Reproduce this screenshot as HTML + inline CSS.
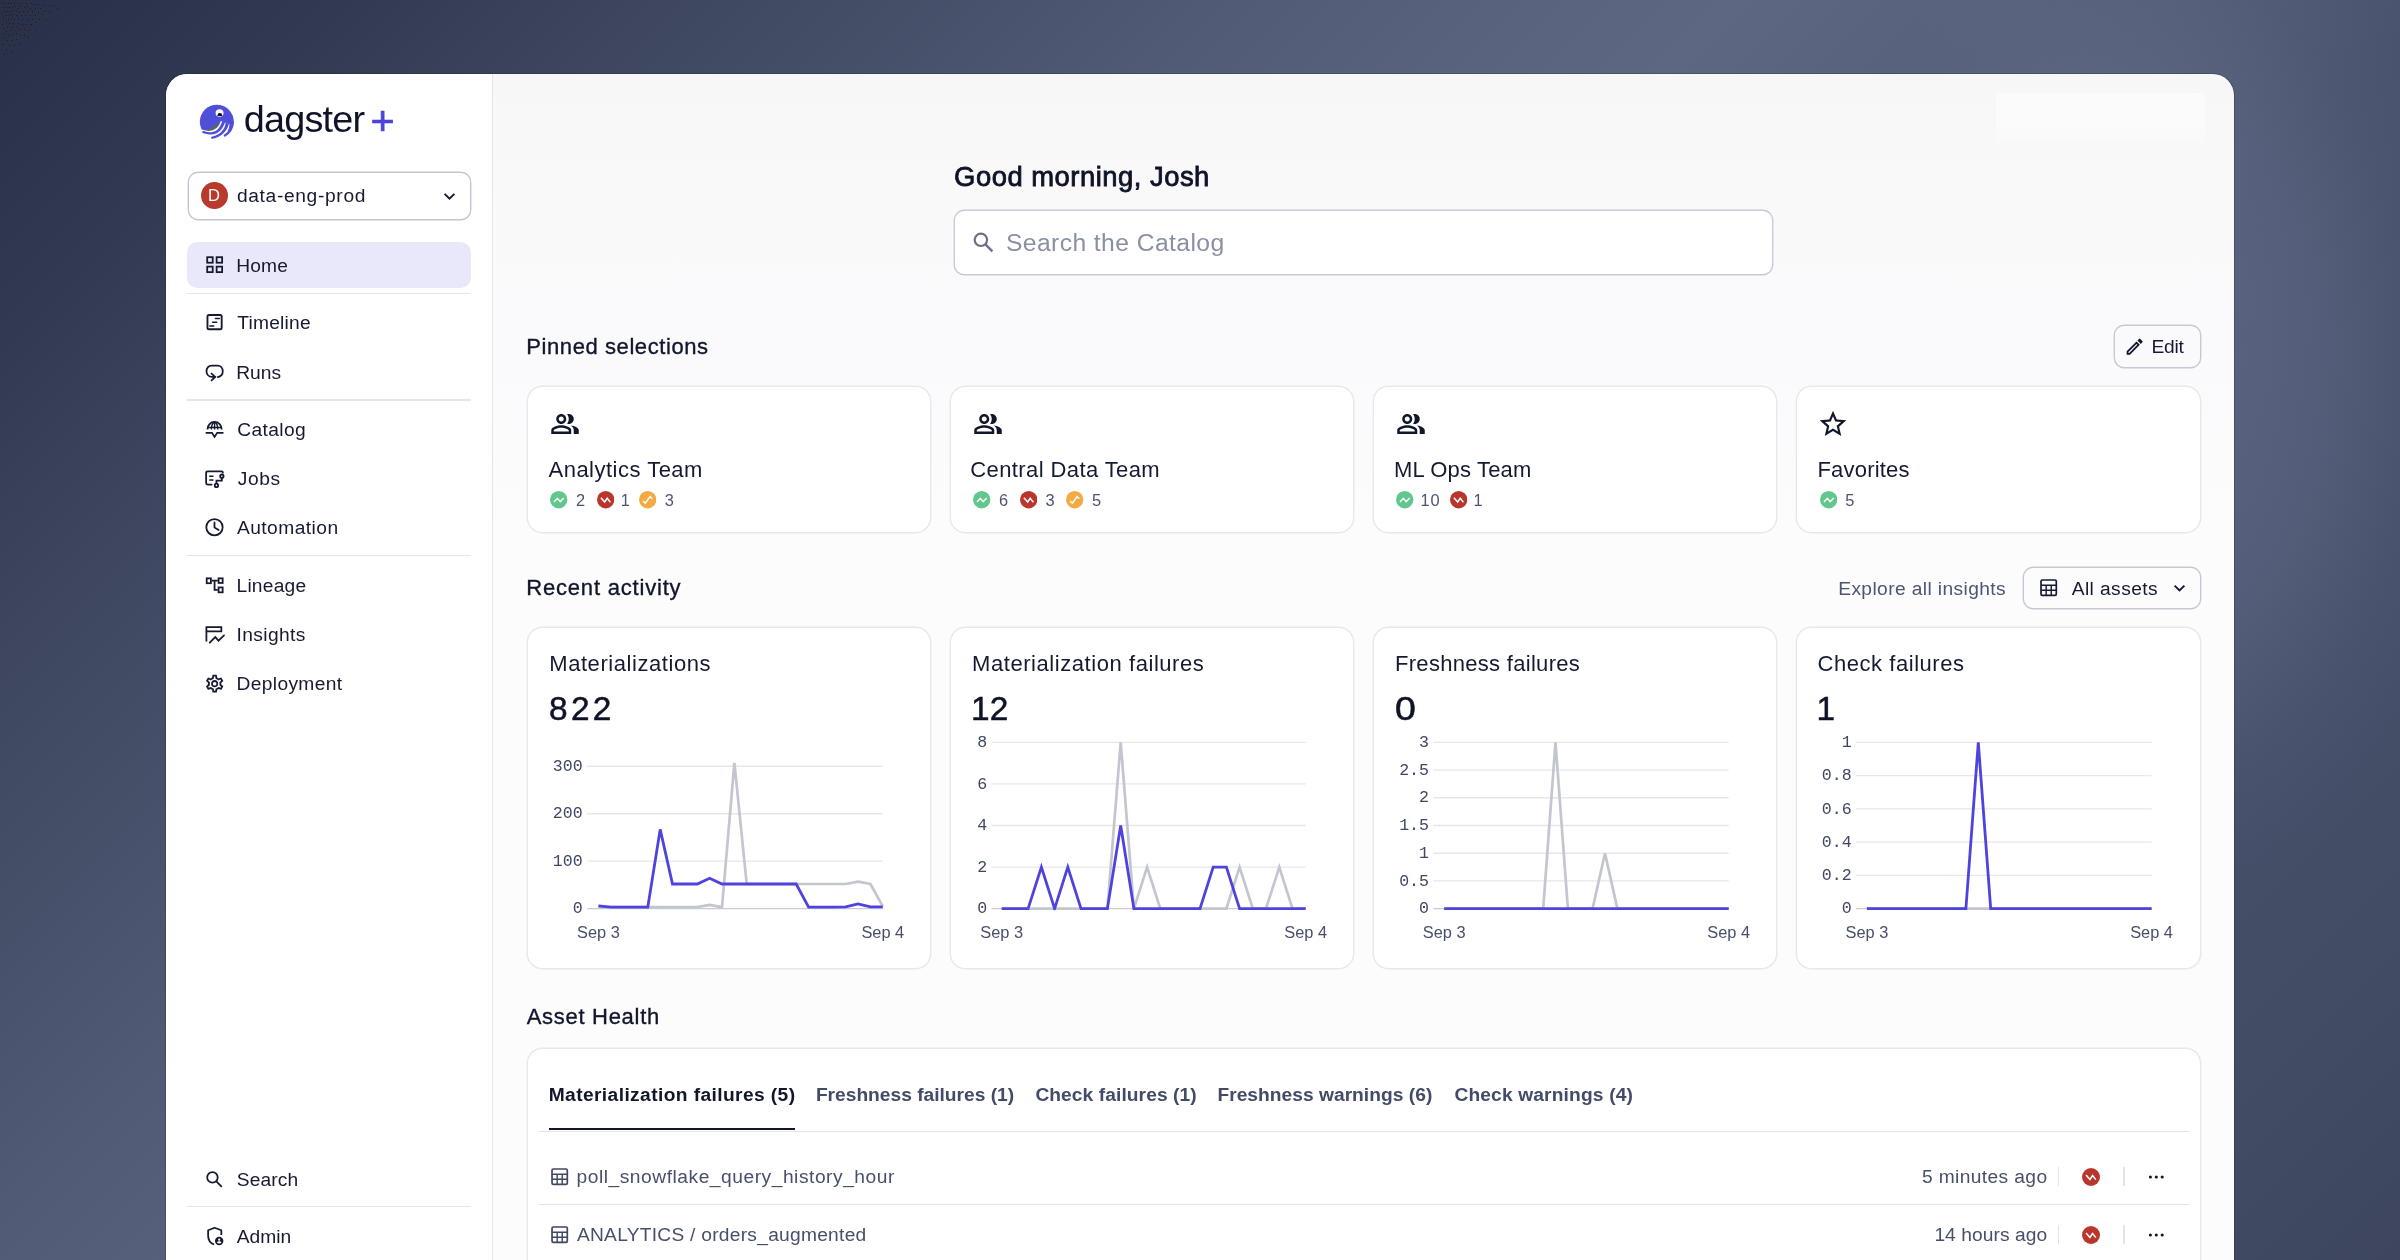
<!DOCTYPE html>
<html lang="en">
<head>
<meta charset="utf-8">
<title>Dagster+ Home</title>
<style>
*{box-sizing:border-box;margin:0;padding:0}
html,body{width:2400px;height:1260px;overflow:hidden}
body{position:relative;font-family:"Liberation Sans",sans-serif;color:#151a31;
 background:radial-gradient(ellipse 330px 520px at 2150px 380px,rgba(128,140,172,.30) 0%,rgba(128,140,172,.27) 34%,rgba(128,140,172,.21) 54%,rgba(128,140,172,.06) 80%,rgba(128,140,172,0) 100%),linear-gradient(135deg,#282f47 0.0%,#323a52 9.3%,#3e465f 17.5%,#475069 25.7%,#515b75 33.9%,#59637d 42.1%,#5d6782 47.5%,#56607a 55.7%,#4a536d 66.7%,#47506a 73.8%,#464f68 82.5%,#434c65 90.7%,#3e465f 100.0%);}
.abs{position:absolute}
.win{position:absolute;left:166px;top:74px;width:2068px;height:1300px;border-radius:21.3px 21.3px 0 0;overflow:hidden;box-shadow:0 0 0 1px rgba(25,30,55,.28);background:linear-gradient(#f7f7f8 0px,#f9f9fa 120px,#fafafc 260px,#fcfcfd 460px,#fcfcfd 100%);will-change:transform}
.side{position:absolute;left:0;top:0;width:327.3px;height:100%;background:#fff;border-right:1.4px solid #e3e5ea}
.t{position:absolute;white-space:nowrap;line-height:30px;height:30px}
.nav{font-size:19.2px;color:#151a31}
.ico{position:absolute;width:21.33px;height:21.33px;overflow:visible}
.hr{position:absolute;left:21px;width:284px;height:1.4px;background:#e4e6ec}
.card{position:absolute;background:#fff;margin:1.5px;box-shadow:0 0 0 1.4px #e6e8ec;border-radius:14.5px}
.h2{font-size:22px;color:#11162b;-webkit-text-stroke:0.35px #11162b}
.ct{font-size:22px;color:#151a31}
.big{font-size:33.4px;color:#0f1328;-webkit-text-stroke:0.5px #0f1328}
.st{position:absolute;top:104.7px;left:22.5px;height:18px;display:flex;align-items:center;font-size:16.4px;color:#4b5471}
.st svg{width:17.4px;height:17.4px;margin-right:8.4px;flex:none}
.st span{margin-right:11.5px;line-height:18px}
.btn{position:absolute;margin:1.5px;box-shadow:0 0 0 1.4px var(--bc,#c6c9d5);border-radius:9px}
.tab{font-size:19.2px;font-weight:bold;color:#434b67}
.row{font-size:19.2px;color:#474f6b}
.mono{font-family:"Liberation Mono",monospace}
svg text{font-family:"Liberation Sans",sans-serif}
svg text.m{font-family:"Liberation Mono",monospace}
</style>
</head>
<body>

<svg class="abs" style="left:0;top:0;width:60px;height:56px" viewBox="0 0 60 56" shape-rendering="crispEdges"><path d="M2 3h1v1h-1zM5 3h1v1h-1zM8 3h1v1h-1zM11 3h1v1h-1zM14 3h1v1h-1zM18 3h1v1h-1zM22 3h1v1h-1zM26 3h1v1h-1zM31 3h1v1h-1zM34 4h1v1h-1zM38 4h1v1h-1zM44 5h1v1h-1zM49 5h1v1h-1zM15 6h1v1h-1zM20 6h1v1h-1zM27 6h1v1h-1zM53 6h1v1h-1zM3 7h1v1h-1zM6 7h1v1h-1zM9 7h1v1h-1zM12 7h1v1h-1zM24 7h1v1h-1zM18 8h1v1h-1zM30 8h1v1h-1zM35 8h1v1h-1zM40 8h1v1h-1zM57 8h1v1h-1zM13 10h1v1h-1zM45 10h1v1h-1zM4 11h1v1h-1zM7 11h1v1h-1zM10 11h1v1h-1zM16 11h1v1h-1zM23 11h1v1h-1zM27 11h1v1h-1zM32 11h1v1h-1zM19 12h1v1h-1zM38 12h1v1h-1zM49 12h1v1h-1zM2 13h1v1h-1zM12 14h1v1h-1zM42 14h1v1h-1zM6 15h1v1h-1zM9 15h1v1h-1zM16 15h1v1h-1zM21 15h1v1h-1zM25 15h1v1h-1zM30 15h1v1h-1zM35 15h1v1h-1zM3 17h1v1h-1zM11 18h1v1h-1zM8 19h1v1h-1zM14 19h1v1h-1zM18 19h1v1h-1zM22 19h1v1h-1zM27 19h1v1h-1zM32 19h1v1h-1zM39 19h1v1h-1zM46 19h1v1h-1zM3 20h1v1h-1zM6 22h1v1h-1zM36 22h1v1h-1zM9 23h1v1h-1zM13 23h1v1h-1zM18 23h1v1h-1zM2 24h1v1h-1zM22 24h1v1h-1zM26 24h1v1h-1zM31 24h1v1h-1zM7 27h1v1h-1zM12 27h1v1h-1zM16 27h1v1h-1zM3 28h1v1h-1zM19 29h1v1h-1zM24 29h1v1h-1zM10 30h1v1h-1zM28 30h1v1h-1zM35 30h1v1h-1zM6 31h1v1h-1zM3 33h1v1h-1zM16 33h1v1h-1zM12 34h1v1h-1zM8 35h1v1h-1zM20 35h1v1h-1zM24 35h1v1h-1zM28 37h1v1h-1zM3 38h1v1h-1zM16 39h1v1h-1zM7 40h1v1h-1zM11 40h1v1h-1zM20 43h1v1h-1zM3 44h1v1h-1zM9 45h1v1h-1zM14 45h1v1h-1zM6 49h1v1h-1zM11 51h1v1h-1zM4 54h1v1h-1z" fill="#161a2c"/></svg>
<div class="win">
<div class="abs" style="left:1830px;top:19px;width:209px;height:52px;background:linear-gradient(rgba(255,255,255,.55),rgba(255,255,255,.35) 80%,rgba(255,255,255,0))"></div>
<aside class="side">
<svg class="abs" style="left:24px;top:21px;width:60px;height:52px" viewBox="0 0 1454 1260">
<circle cx="650" cy="648" r="412" fill="#4f4fdc"/>
<path d="M240 826L273 837L305 847L335 855L363 874L390 894L419 910L448 923L478 933L508 939L539 941L570 939L600 933L628 923L655 909L680 890L701 869L720 844L734 817L746 789L753 759L758 727L758 695L756 662L748 628L748 628L721 649L698 669L675 685L654 700L635 711L617 721L601 730L586 737L572 744L559 751L547 758L534 766L521 774L506 784L490 794L471 805L449 816L425 827L398 838L368 849L335 855L305 847L273 837L240 826Z" fill="#5a6273"/>
<path d="M240 826Q640 972 748 628L1100 760V1200H150V826Z" fill="#fff"/>
<path d="M313 923L345 933L376 941L406 948L436 952L464 955L492 957L520 956L546 953L572 949L597 943L621 934L645 924L667 912L689 898L710 882L729 864L748 844L766 822L782 799L798 774L813 747L826 719L839 688L851 657L779 633L770 663L760 691L749 716L737 741L725 763L712 783L698 802L684 819L668 835L652 848L635 860L618 871L599 880L580 887L559 893L538 898L516 900L492 901L468 901L443 898L416 894L389 888L360 881L331 871Z" fill="#4f4fdc"/><circle cx="322" cy="897" r="27" fill="#4f4fdc"/>
<path d="M543 1062L570 1055L596 1048L620 1039L645 1030L668 1021L690 1010L712 999L732 987L752 974L771 961L790 946L807 931L823 915L839 898L854 881L868 863L881 844L893 824L904 803L914 782L924 759L932 736L940 713L946 688L864 672L860 693L856 714L851 734L845 754L838 773L830 791L821 808L812 825L801 842L790 857L777 872L764 887L750 901L735 914L719 927L702 938L684 950L665 960L645 970L624 980L602 988L579 996L555 1003L531 1010Z" fill="#4f4fdc"/><circle cx="537" cy="1036" r="27" fill="#4f4fdc"/>
<path d="M843 982A386 386 0 0 0 1035 660" fill="none" stroke="#4f4fdc" stroke-width="54" stroke-linecap="round"/>
<path d="M1010 690L958 704Q960 800 900 905L1000 830Z" fill="#4f4fdc"/>
<ellipse cx="716" cy="436" rx="96" ry="88" fill="#fff"/>
<path d="M664 508v-14a58 60 0 0 1 116 0v14z" fill="#0d1024"/>
<circle cx="388" cy="580" r="24" fill="#535b86"/>
<path d="M325 600l11 28 28 11-28 11-11 28-11-28-28-11 28-11z" fill="#535b86"/>
<circle cx="388" cy="705" r="24" fill="#535b86"/>
</svg>
<div class="t " style="top:30.20px;font-size:37.8px;left:77.75px;letter-spacing:-0.805px;color:#0f1328;">dagster</div>
<div class="t " style="top:31.72px;font-size:41.5px;left:204.60px;color:#4f43dd;-webkit-text-stroke:0.7px #4f43dd;">+</div>
<div class="btn" style="left:21px;top:97px;width:281.0px;height:46.0px;--bc:#c3c6d2"></div>
<div class="abs" style="left:34.599999999999994px;top:107.80000000000001px;width:27.6px;height:27.6px;border-radius:50%;background:#b93a2d"></div>
<div class="t " style="top:107.15px;font-size:16.6px;left:42.00px;color:#fff;">D</div>
<div class="t " style="top:106.95px;font-size:19.2px;left:70.90px;letter-spacing:0.665px;">data-eng-prod</div>
<svg class="abs" style="left:277px;top:115.5px;width:13px;height:13px" viewBox="0 0 13 13"><path d="M1.6 3.8l4.900 4.900 4.900-4.900" fill="none" stroke="#151a31" stroke-width="1.900"/></svg>
<div class="abs" style="left:21px;top:168.2px;width:284px;height:46px;border-radius:10.5px;background:#e9e8fa"></div>
<svg class="ico" viewBox="0 0 24 24" style="left:37.54px;top:180.23px;width:21.33px;height:21.33px;"><g fill="none" stroke="currentColor" stroke-width="2" stroke-linejoin="miter"><rect x="3.6" y="3.6" width="6.2" height="6.2"/><rect x="14.2" y="3.6" width="6.2" height="6.2"/><rect x="3.6" y="14.2" width="6.2" height="6.2"/><rect x="14.2" y="14.2" width="6.2" height="6.2"/></g></svg>
<div class="t nav" style="top:176.75px;font-size:19.2px;left:70.25px;letter-spacing:0.163px;">Home</div>
<svg class="ico" viewBox="0 0 24 24" style="left:37.74px;top:238.39px;width:21.33px;height:21.33px;"><g fill="none" stroke="currentColor" stroke-width="2" stroke-linecap="round" stroke-linejoin="round"><rect x="3.900" y="3.400" width="16" height="16" rx="1.800" stroke-width="2.100"/><path d="M12.800 7.400h4.600M9.700 11.600h4.600M6.500 15.800h4.500" stroke-width="1.600"/></g></svg>
<div class="t nav" style="top:234.45px;font-size:19.2px;left:71.25px;letter-spacing:0.233px;">Timeline</div>
<svg class="ico" viewBox="0 0 24 24" style="left:37.74px;top:287.53px;width:21.33px;height:21.33px;"><g fill="none" stroke="currentColor" stroke-width="2" stroke-linecap="round" stroke-linejoin="round"><path d="M15.400 16.900C19 16.500 21.100 13.800 21.100 10.500 21.100 6.500 18.400 4 15.300 4H8.600C5.300 4 2.800 6.800 2.800 10.400c0 3.400 2.600 6.200 6.200 6.400h3.200"/><path d="M8.500 13l4.100 3.800-4.100 3.800" stroke-linejoin="miter"/></g></svg>
<div class="t nav" style="top:283.60px;font-size:19.2px;left:70.25px;letter-spacing:-0.016px;">Runs</div>
<svg class="ico" viewBox="0 0 24 24" style="left:37.74px;top:345.03px;width:21.33px;height:21.33px;"><g fill="none" stroke="currentColor" stroke-width="2" stroke-linecap="round" stroke-linejoin="round" stroke-width="1.900"><path d="M3.900 11.800C3.900 7 7.400 3.300 11.900 3.300s8 3.700 8 8.500" stroke-linecap="butt"/><path d="M8.300 11.800c0-4 1.500-7.300 3.600-8.500 2.100 1.200 3.600 4.500 3.600 8.500M11.900 3.300v8.500M4.400 9.500h15" stroke-width="1.600" stroke-linecap="butt"/><path d="M2.600 15.600h6.400l2.900 4.600 2.900-4.600h6.400" stroke-linejoin="miter" stroke-width="2"/></g></svg>
<div class="t nav" style="top:341.10px;font-size:19.2px;left:71.25px;letter-spacing:0.381px;">Catalog</div>
<svg class="ico" viewBox="0 0 24 24" style="left:37.74px;top:394.38px;width:21.33px;height:21.33px;"><g fill="none" stroke="currentColor" stroke-width="2" stroke-linecap="round" stroke-linejoin="round" stroke-width="1.900"><path d="M21.200 5.300c0-.9-.6-1.450-1.500-1.450H4.200c-1.100 0-1.800.7-1.800 1.800V16.900c0 1.100.7 1.800 1.800 1.800h4.400"/><path d="M5.900 9.200h4.800M5.900 13.500h4.800" stroke-width="1.700" stroke-linecap="butt"/><circle cx="20.100" cy="9.200" r="1.900"/><circle cx="14" cy="19.600" r="1.900"/><path d="M20.100 11.300v2.900H14v3.200" stroke-linejoin="miter" stroke-linecap="butt"/></g></svg>
<div class="t nav" style="top:390.45px;font-size:19.2px;left:71.75px;letter-spacing:0.571px;">Jobs</div>
<svg class="ico" viewBox="0 0 24 24" style="left:37.74px;top:443.39px;width:21.33px;height:21.33px;"><g fill="none" stroke="currentColor" stroke-width="2" stroke-linecap="round" stroke-linejoin="round" stroke-width="2.100"><circle cx="11.800" cy="11.500" r="9.200"/><path d="M11.800 6.200v5.700l4.700 2.700"/></g></svg>
<div class="t nav" style="top:439.45px;font-size:19.2px;left:70.90px;letter-spacing:0.468px;">Automation</div>
<svg class="ico" viewBox="0 0 24 24" style="left:37.74px;top:500.69px;width:21.33px;height:21.33px;"><g fill="none" stroke="currentColor" stroke-width="2" stroke-linejoin="miter" stroke-width="1.900"><rect x="3.050" y="3.750" width="4.700" height="5.500"/><rect x="16.400" y="3.750" width="4.600" height="5.200"/><rect x="16.400" y="14" width="4.600" height="5.500"/><path d="M8.700 6.300h6.800M11.900 6.300v10.400h3.600"/></g></svg>
<div class="t nav" style="top:496.75px;font-size:19.2px;left:70.50px;letter-spacing:0.214px;">Lineage</div>
<svg class="ico" viewBox="0 0 24 24" style="left:37.74px;top:549.79px;width:21.33px;height:21.33px;"><g fill="none" stroke="currentColor" stroke-width="2" stroke-linecap="round" stroke-linejoin="round"><path d="M2.700 19.800V3.600h16.800v4.800H2.700" stroke-linejoin="miter" stroke-linecap="butt"/><path d="M6.400 21l6.300-6.200 3.600 4 6.200-5.900" stroke-linejoin="miter"/></g></svg>
<div class="t nav" style="top:545.85px;font-size:19.2px;left:70.50px;letter-spacing:0.388px;">Insights</div>
<svg class="ico" viewBox="0 0 24 24" style="left:37.54px;top:598.74px;width:21.33px;height:21.33px;"><path fill="currentColor" fill-rule="evenodd" d="M19.430 12.980c.040-.320.070-.640.070-.980s-.030-.660-.070-.980l2.110-1.650c.190-.150.240-.420.120-.640l-2-3.460c-.120-.220-.390-.300-.610-.220l-2.490 1c-.520-.400-1.080-.730-1.690-.980l-.380-2.650C14.460 2.180 14.250 2 14 2h-4c-.250 0-.460.180-.490.420l-.380 2.650c-.610.250-1.170.590-1.690.980l-2.490-1c-.230-.090-.490 0-.610.220l-2 3.460c-.130.220-.070.490.120.640l2.110 1.650c-.040.320-.070.650-.070.980s.030.660.070.980l-2.110 1.650c-.190.150-.240.420-.120.640l2 3.460c.120.220.390.300.610.220l2.490-1c.520.400 1.080.730 1.690.980l.380 2.650c.030.240.240.420.490.420h4c.250 0 .460-.180.490-.420l.380-2.650c.610-.250 1.170-.590 1.690-.980l2.490 1c.230.090.490 0 .610-.220l2-3.460c.120-.220.070-.490-.120-.640l-2.110-1.650zm-1.980-1.710c.040.310.050.520.050.730 0 .210-.020.430-.050.730l-.140 1.130.890.700 1.080.840-.700 1.210-1.270-.510-1.040-.420-.900.680c-.430.320-.840.560-1.250.730l-1.060.430-.160 1.130-.200 1.350h-1.400l-.190-1.350-.160-1.130-1.060-.430c-.430-.180-.830-.410-1.230-.710l-.910-.700-1.060.430-1.270.510-.700-1.210 1.080-.840.890-.700-.140-1.130c-.030-.310-.050-.540-.050-.740s.020-.430.050-.730l.140-1.130-.890-.700-1.080-.840.700-1.210 1.270.510 1.040.420.900-.680c.430-.320.840-.560 1.250-.730l1.060-.430.160-1.130.200-1.350h1.390l.190 1.350.160 1.130 1.060.430c.430.180.830.410 1.230.710l.910.700 1.060-.430 1.270-.510.700 1.210-1.070.850-.890.700.140 1.130zM12 8c-2.210 0-4 1.790-4 4s1.790 4 4 4 4-1.790 4-4-1.790-4-4-4zm0 6c-1.100 0-2-.900-2-2s.900-2 2-2 2 .900 2 2-.900 2-2 2z"/></svg>
<div class="t nav" style="top:595.25px;font-size:19.2px;left:70.50px;letter-spacing:0.355px;">Deployment</div>
<svg class="ico" viewBox="0 0 24 24" style="left:37.74px;top:1094.54px;width:21.33px;height:21.33px;"><g fill="none" stroke="currentColor" stroke-width="2" stroke-linecap="round" stroke-linejoin="round"><circle cx="9.500" cy="9.500" r="5.900"/><path d="M13.900 13.900l6.100 6.100" stroke-linecap="butt"/></g></svg>
<div class="t nav" style="top:1090.60px;font-size:19.2px;left:70.75px;letter-spacing:0.125px;">Search</div>
<svg class="ico" viewBox="0 0 24 24" style="left:37.74px;top:1151.79px;width:21.33px;height:21.33px;"><g fill="none" stroke="currentColor" stroke-width="2" stroke-linecap="round" stroke-linejoin="round"><path d="M11.300 20.800C7 19 4.650 15.400 4.650 10.850V4.800L11.900 2l7.600 2.800V10" stroke-linejoin="round" stroke-linecap="butt"/></g><circle cx="17.100" cy="16.900" r="4.700" fill="currentColor"/><circle cx="17.100" cy="15.400" r="1.250" fill="#fff"/><path d="M14.500 18.700c.5-1 1.500-1.500 2.600-1.500s2.100.5 2.600 1.500c-.6.600-1.600 1-2.600 1s-2-.4-2.600-1z" fill="#fff"/></svg>
<div class="t nav" style="top:1147.85px;font-size:19.2px;left:70.75px;letter-spacing:0.009px;">Admin</div>
<div class="hr" style="top:218.7px"></div>
<div class="hr" style="top:325.3px"></div>
<div class="hr" style="top:480.7px"></div>
<div class="hr" style="top:1132.0px"></div>
</aside>
<main>
<h1 class="t " style="top:88.11px;font-size:27.4px;left:788.10px;letter-spacing:0.505px;color:#0f1328;-webkit-text-stroke:0.8px #0f1328;font-weight:normal;">Good morning, Josh</h1>
<div class="btn" style="left:787.2px;top:135.2px;width:817.3px;height:63.0px;background:#fff;--bc:#c8cbd6"></div>
<svg class="abs" style="left:806px;top:157px;width:24px;height:24px" viewBox="0 0 24 24"><circle cx="8.9" cy="8.8" r="6.2" fill="none" stroke="#6a7086" stroke-width="2.2"/><path d="M13.4 13.4l7 7" stroke="#6a7086" stroke-width="2.4"/></svg>
<div class="t " style="top:153.54px;font-size:24.7px;left:839.90px;letter-spacing:0.411px;color:#8a90a4;">Search the Catalog</div>
<div class="t h2" style="top:257.78px;font-size:22px;left:360.25px;letter-spacing:0.588px;">Pinned selections</div>
<div class="btn" style="left:1947px;top:250.8px;width:85.3px;height:40.4px;--bc:#c6c9d5"></div>
<svg class="abs" style="left:1957.6999999999998px;top:262.0px;width:21.33px;height:21.33px" viewBox="0 0 24 24"><path fill="#11162b" d="M3 17.250V21h3.750L17.810 9.940l-3.750-3.750L3 17.250zM5.920 19H5v-.920l9.060-9.060.920.920L5.920 19zM20.710 5.630l-2.340-2.340a.996.996 0 0 0-1.410 0l-1.830 1.830 3.750 3.750 1.830-1.830a.996.996 0 0 0 0-1.410z"/></svg>
<div class="t nav" style="top:258.05px;font-size:19.2px;left:1985.50px;letter-spacing:-0.244px;">Edit</div>
<div class="card" style="left:360.25px;top:311px;width:402.6px;height:145px">
<svg class="abs" style="left:22.4px;top:22.7px;width:30px;height:30px" viewBox="0 0 24 24"><path fill="#11162b" d="M16.67 13.130C18.040 14.060 19 15.320 19 17v3h4v-3c0-2.180-3.570-3.470-6.330-3.870zM15 12c2.210 0 4-1.790 4-4s-1.790-4-4-4c-.470 0-.910.100-1.330.240C14.500 5.270 15 6.580 15 8s-.500 2.730-1.330 3.760c.420.140.860.240 1.330.240zM9 12c2.210 0 4-1.790 4-4S11.210 4 9 4 5 5.790 5 8s1.790 4 4 4zm0-6c1.100 0 2 .900 2 2s-.900 2-2 2-2-.900-2-2 .900-2 2-2zm0 7c-2.670 0-8 1.340-8 4v3h16v-3c0-2.660-5.330-4-8-4zm6 5H3v-.990C3.200 16.290 6.300 15 9 15s5.800 1.290 6 2v1z"/></svg>
<div class="t ct" style="top:68.18px;font-size:22px;left:20.75px;letter-spacing:0.491px;">Analytics Team</div>
<div class="st"><svg viewBox="0 0 24 24" style=""><circle cx="12" cy="12" r="12" fill="#62c78c"/><path d="M5.5 15.2L10.2 10L14.1 14.8L18.9 9.6" fill="none" stroke="#fff" stroke-width="2"/></svg><span>2</span><svg viewBox="0 0 24 24" style=""><circle cx="12" cy="12" r="12" fill="#b8362c"/><path d="M5.4 9.2L10.6 15.2L14.1 10L18.5 15.5" fill="none" stroke="#fff" stroke-width="2"/></svg><span style="margin-left:-1.7px;margin-right:9.2px">1</span><svg viewBox="0 0 24 24" style=""><circle cx="12" cy="12" r="12" fill="#f3aa44"/><path d="M5.7 14L8.8 16.7L15.2 7.7L18.3 10.8" fill="none" stroke="#fff" stroke-width="2"/></svg><span>3</span></div>
</div>
<div class="card" style="left:783.30px;top:311px;width:402.6px;height:145px">
<svg class="abs" style="left:22.4px;top:22.7px;width:30px;height:30px" viewBox="0 0 24 24"><path fill="#11162b" d="M16.67 13.130C18.040 14.060 19 15.320 19 17v3h4v-3c0-2.180-3.570-3.470-6.330-3.870zM15 12c2.210 0 4-1.790 4-4s-1.790-4-4-4c-.470 0-.910.100-1.330.240C14.500 5.270 15 6.580 15 8s-.500 2.730-1.330 3.760c.420.140.860.240 1.330.240zM9 12c2.210 0 4-1.790 4-4S11.210 4 9 4 5 5.790 5 8s1.790 4 4 4zm0-6c1.100 0 2 .900 2 2s-.900 2-2 2-2-.900-2-2 .900-2 2-2zm0 7c-2.670 0-8 1.340-8 4v3h16v-3c0-2.660-5.330-4-8-4zm6 5H3v-.990C3.200 16.290 6.300 15 9 15s5.800 1.290 6 2v1z"/></svg>
<div class="t ct" style="top:68.18px;font-size:22px;left:19.45px;letter-spacing:0.401px;">Central Data Team</div>
<div class="st"><svg viewBox="0 0 24 24" style=""><circle cx="12" cy="12" r="12" fill="#62c78c"/><path d="M5.5 15.2L10.2 10L14.1 14.8L18.9 9.6" fill="none" stroke="#fff" stroke-width="2"/></svg><span>6</span><svg viewBox="0 0 24 24" style=""><circle cx="12" cy="12" r="12" fill="#b8362c"/><path d="M5.4 9.2L10.6 15.2L14.1 10L18.5 15.5" fill="none" stroke="#fff" stroke-width="2"/></svg><span>3</span><svg viewBox="0 0 24 24" style=""><circle cx="12" cy="12" r="12" fill="#f3aa44"/><path d="M5.7 14L8.8 16.7L15.2 7.7L18.3 10.8" fill="none" stroke="#fff" stroke-width="2"/></svg><span>5</span></div>
</div>
<div class="card" style="left:1206.40px;top:311px;width:402.6px;height:145px">
<svg class="abs" style="left:22.4px;top:22.7px;width:30px;height:30px" viewBox="0 0 24 24"><path fill="#11162b" d="M16.67 13.130C18.040 14.060 19 15.320 19 17v3h4v-3c0-2.180-3.570-3.470-6.330-3.870zM15 12c2.210 0 4-1.790 4-4s-1.790-4-4-4c-.470 0-.910.100-1.330.240C14.500 5.270 15 6.580 15 8s-.500 2.730-1.330 3.760c.420.140.860.240 1.330.240zM9 12c2.210 0 4-1.790 4-4S11.210 4 9 4 5 5.790 5 8s1.790 4 4 4zm0-6c1.100 0 2 .900 2 2s-.900 2-2 2-2-.900-2-2 .900-2 2-2zm0 7c-2.670 0-8 1.340-8 4v3h16v-3c0-2.660-5.330-4-8-4zm6 5H3v-.990C3.200 16.290 6.300 15 9 15s5.800 1.290 6 2v1z"/></svg>
<div class="t ct" style="top:68.18px;font-size:22px;left:20.10px;letter-spacing:0.165px;">ML Ops Team</div>
<div class="st"><svg viewBox="0 0 24 24" style=""><circle cx="12" cy="12" r="12" fill="#62c78c"/><path d="M5.5 15.2L10.2 10L14.1 14.8L18.9 9.6" fill="none" stroke="#fff" stroke-width="2"/></svg><span style="margin-left:-1.7px;letter-spacing:1px;margin-right:8.8px">10</span><svg viewBox="0 0 24 24" style=""><circle cx="12" cy="12" r="12" fill="#b8362c"/><path d="M5.4 9.2L10.6 15.2L14.1 10L18.5 15.5" fill="none" stroke="#fff" stroke-width="2"/></svg><span style="margin-left:-1.7px;margin-right:9.2px">1</span></div>
</div>
<div class="card" style="left:1629.50px;top:311px;width:402.6px;height:145px">
<svg class="abs" style="left:20.1px;top:21.3px;width:32px;height:32px" viewBox="0 0 24 24"><path fill="#11162b" d="M22 9.240l-7.190-.620L12 2 9.190 8.630 2 9.240l5.460 4.730L5.820 21 12 17.270 18.180 21l-1.630-7.030L22 9.240zM12 15.400l-3.760 2.270 1-4.280-3.320-2.880 4.380-.380L12 6.100l1.710 4.040 4.380.380-3.320 2.880 1 4.280L12 15.400z"/></svg>
<div class="t ct" style="top:68.18px;font-size:22px;left:20.50px;letter-spacing:0.179px;">Favorites</div>
<div class="st"><svg viewBox="0 0 24 24" style=""><circle cx="12" cy="12" r="12" fill="#62c78c"/><path d="M5.5 15.2L10.2 10L14.1 14.8L18.9 9.6" fill="none" stroke="#fff" stroke-width="2"/></svg><span>5</span></div>
</div>
<div class="t h2" style="top:498.68px;font-size:22px;left:360.25px;letter-spacing:0.807px;">Recent activity</div>
<div class="t " style="top:499.85px;font-size:19.2px;left:1672.20px;letter-spacing:0.391px;color:#4c5572;">Explore all insights</div>
<div class="btn" style="left:1856px;top:492.29999999999995px;width:176.3px;height:40.0px;--bc:#c6c9d5"></div>
<svg class="abs" style="left:1872.4px;top:502.79999999999995px;width:21.33px;height:21.33px;color:#151a31" viewBox="0 0 24 24"><g fill="none" stroke="currentColor" stroke-width="1.900"><rect x="3.400" y="3.400" width="17.200" height="17.200" rx="1.500"/><path d="M3.400 9.200h17.200M3.400 14.900h17.200M9.200 9.200v11.400M14.900 9.200v11.400" stroke-width="1.600"/></g></svg>
<div class="t nav" style="top:499.85px;font-size:19.2px;left:1905.70px;letter-spacing:0.421px;">All assets</div>
<svg class="abs" style="left:2007px;top:508px;width:13px;height:13px" viewBox="0 0 13 13"><path d="M1.6 3.6l4.9 4.9 4.9-4.9" fill="none" stroke="#151a31" stroke-width="1.9"/></svg>
<div class="card" style="left:360.25px;top:552.25px;width:402.6px;height:340.5px">
<svg class="abs" style="left:0;top:0;width:402.6px;height:340px" viewBox="0 0 402.6 340"><line x1="59.1" x2="354.8" y1="138.25" y2="138.25" stroke="#e5e7ec" stroke-width="1.35"/><text class="m" x="54.7" y="142.95" text-anchor="end" font-size="16.6" fill="#3f4763">300</text><line x1="59.1" x2="354.8" y1="185.72" y2="185.72" stroke="#e5e7ec" stroke-width="1.35"/><text class="m" x="54.7" y="190.42" text-anchor="end" font-size="16.6" fill="#3f4763">200</text><line x1="59.1" x2="354.8" y1="233.18" y2="233.18" stroke="#e5e7ec" stroke-width="1.35"/><text class="m" x="54.7" y="237.88" text-anchor="end" font-size="16.6" fill="#3f4763">100</text><line x1="59.1" x2="354.8" y1="280.65" y2="280.65" stroke="#c8cbd5" stroke-width="1.35"/><text class="m" x="54.7" y="285.35" text-anchor="end" font-size="16.6" fill="#3f4763">0</text><clipPath id="c526"><rect x="0" y="0" width="402.6" height="282.15"/></clipPath><g clip-path="url(#c526)"><polyline points="70.4,279.2 82.7,279.2 95.1,279.2 107.4,279.2 119.8,279.2 132.2,279.2 144.5,279.2 156.9,279.2 169.3,279.2 181.6,276.9 194.0,279.2 206.4,134.9 218.7,256.0 231.1,256.0 243.5,256.0 255.8,256.0 268.2,256.0 280.6,256.0 292.9,256.0 305.3,256.0 317.7,256.0 330.0,253.6 342.4,256.0 354.8,278.3" fill="none" stroke="#c3c6cf" stroke-width="2.7" stroke-linejoin="miter"/><polyline points="70.4,277.8 82.7,279.2 95.1,279.2 107.4,279.2 119.8,279.2 132.2,201.4 144.5,256.0 156.9,256.0 169.3,256.0 181.6,250.3 194.0,256.0 206.4,256.0 218.7,256.0 231.1,256.0 243.5,256.0 255.8,256.0 268.2,256.0 280.6,279.2 292.9,279.2 305.3,279.2 317.7,278.8 330.0,275.9 342.4,278.8 354.8,278.8" fill="none" stroke="#4f43dd" stroke-width="2.8" stroke-linejoin="miter"/></g><text x="70.4" y="310.5" text-anchor="middle" font-size="16.4" fill="#474f6a">Sep 3</text><text x="354.8" y="310.5" text-anchor="middle" font-size="16.4" fill="#474f6a">Sep 4</text></svg>
<div class="t ct" style="top:21.13px;font-size:22px;left:21.50px;letter-spacing:0.567px;">Materializations</div>
<div class="t big" style="top:66.48px;font-size:33.4px;left:21.25px;letter-spacing:3.305px;">822</div>
</div>
<div class="card" style="left:783.30px;top:552.25px;width:402.6px;height:340.5px">
<svg class="abs" style="left:0;top:0;width:402.6px;height:340px" viewBox="0 0 402.6 340"><line x1="40.5" x2="354.7" y1="114.35" y2="114.35" stroke="#e5e7ec" stroke-width="1.35"/><text class="m" x="36.1" y="119.05" text-anchor="end" font-size="16.6" fill="#3f4763">8</text><line x1="40.5" x2="354.7" y1="155.92" y2="155.92" stroke="#e5e7ec" stroke-width="1.35"/><text class="m" x="36.1" y="160.62" text-anchor="end" font-size="16.6" fill="#3f4763">6</text><line x1="40.5" x2="354.7" y1="197.50" y2="197.50" stroke="#e5e7ec" stroke-width="1.35"/><text class="m" x="36.1" y="202.20" text-anchor="end" font-size="16.6" fill="#3f4763">4</text><line x1="40.5" x2="354.7" y1="239.08" y2="239.08" stroke="#e5e7ec" stroke-width="1.35"/><text class="m" x="36.1" y="243.78" text-anchor="end" font-size="16.6" fill="#3f4763">2</text><line x1="40.5" x2="354.7" y1="280.65" y2="280.65" stroke="#c8cbd5" stroke-width="1.35"/><text class="m" x="36.1" y="285.35" text-anchor="end" font-size="16.6" fill="#3f4763">0</text><clipPath id="c949"><rect x="0" y="0" width="402.6" height="282.15"/></clipPath><g clip-path="url(#c949)"><polyline points="50.7,280.6 63.9,280.6 77.1,280.6 90.4,280.6 103.6,280.6 116.8,280.6 130.0,280.6 143.2,280.6 156.4,280.6 169.7,114.4 182.9,280.6 196.1,239.1 209.3,280.6 222.5,280.6 235.7,280.6 249.0,280.6 262.2,280.6 275.4,280.6 288.6,239.1 301.8,280.6 315.0,280.6 328.3,239.1 341.5,280.6 354.7,280.6" fill="none" stroke="#c3c6cf" stroke-width="2.7" stroke-linejoin="miter"/><polyline points="50.7,280.6 63.9,280.6 77.1,280.6 90.4,239.1 103.6,280.6 116.8,239.1 130.0,280.6 143.2,280.6 156.4,280.6 169.7,197.5 182.9,280.6 196.1,280.6 209.3,280.6 222.5,280.6 235.7,280.6 249.0,280.6 262.2,239.1 275.4,239.1 288.6,280.6 301.8,280.6 315.0,280.6 328.3,280.6 341.5,280.6 354.7,280.6" fill="none" stroke="#4f43dd" stroke-width="2.8" stroke-linejoin="miter"/></g><text x="50.7" y="310.5" text-anchor="middle" font-size="16.4" fill="#474f6a">Sep 3</text><text x="354.7" y="310.5" text-anchor="middle" font-size="16.4" fill="#474f6a">Sep 4</text></svg>
<div class="t ct" style="top:21.13px;font-size:22px;left:21.30px;letter-spacing:0.558px;">Materialization failures</div>
<div class="t big" style="top:66.48px;font-size:33.4px;left:20.30px;">12</div>
</div>
<div class="card" style="left:1206.40px;top:552.25px;width:402.6px;height:340.5px">
<svg class="abs" style="left:0;top:0;width:402.6px;height:340px" viewBox="0 0 402.6 340"><line x1="59.4" x2="354.7" y1="114.35" y2="114.35" stroke="#e5e7ec" stroke-width="1.35"/><text class="m" x="55.0" y="119.05" text-anchor="end" font-size="16.6" fill="#3f4763">3</text><line x1="59.4" x2="354.7" y1="142.07" y2="142.07" stroke="#e5e7ec" stroke-width="1.35"/><text class="m" x="55.0" y="146.77" text-anchor="end" font-size="16.6" fill="#3f4763">2.5</text><line x1="59.4" x2="354.7" y1="169.78" y2="169.78" stroke="#e5e7ec" stroke-width="1.35"/><text class="m" x="55.0" y="174.48" text-anchor="end" font-size="16.6" fill="#3f4763">2</text><line x1="59.4" x2="354.7" y1="197.50" y2="197.50" stroke="#e5e7ec" stroke-width="1.35"/><text class="m" x="55.0" y="202.20" text-anchor="end" font-size="16.6" fill="#3f4763">1.5</text><line x1="59.4" x2="354.7" y1="225.22" y2="225.22" stroke="#e5e7ec" stroke-width="1.35"/><text class="m" x="55.0" y="229.92" text-anchor="end" font-size="16.6" fill="#3f4763">1</text><line x1="59.4" x2="354.7" y1="252.93" y2="252.93" stroke="#e5e7ec" stroke-width="1.35"/><text class="m" x="55.0" y="257.63" text-anchor="end" font-size="16.6" fill="#3f4763">0.5</text><line x1="59.4" x2="354.7" y1="280.65" y2="280.65" stroke="#c8cbd5" stroke-width="1.35"/><text class="m" x="55.0" y="285.35" text-anchor="end" font-size="16.6" fill="#3f4763">0</text><clipPath id="c1372"><rect x="0" y="0" width="402.6" height="282.15"/></clipPath><g clip-path="url(#c1372)"><polyline points="70.2,280.6 82.6,280.6 94.9,280.6 107.3,280.6 119.7,280.6 132.0,280.6 144.4,280.6 156.8,280.6 169.2,280.6 181.5,114.4 193.9,280.6 206.3,280.6 218.6,280.6 231.0,225.2 243.4,280.6 255.7,280.6 268.1,280.6 280.5,280.6 292.9,280.6 305.2,280.6 317.6,280.6 330.0,280.6 342.3,280.6 354.7,280.6" fill="none" stroke="#c3c6cf" stroke-width="2.7" stroke-linejoin="miter"/><polyline points="70.2,280.6 82.6,280.6 94.9,280.6 107.3,280.6 119.7,280.6 132.0,280.6 144.4,280.6 156.8,280.6 169.2,280.6 181.5,280.6 193.9,280.6 206.3,280.6 218.6,280.6 231.0,280.6 243.4,280.6 255.7,280.6 268.1,280.6 280.5,280.6 292.9,280.6 305.2,280.6 317.6,280.6 330.0,280.6 342.3,280.6 354.7,280.6" fill="none" stroke="#4f43dd" stroke-width="2.8" stroke-linejoin="miter"/></g><text x="70.2" y="310.5" text-anchor="middle" font-size="16.4" fill="#474f6a">Sep 3</text><text x="354.7" y="310.5" text-anchor="middle" font-size="16.4" fill="#474f6a">Sep 4</text></svg>
<div class="t ct" style="top:21.13px;font-size:22px;left:21.10px;letter-spacing:0.298px;">Freshness failures</div>
<div class="t big" style="top:66.48px;font-size:33.4px;left:21.10px;transform:scaleX(1.12);transform-origin:0 50%;">0</div>
</div>
<div class="card" style="left:1629.50px;top:552.25px;width:402.6px;height:340.5px">
<svg class="abs" style="left:0;top:0;width:402.6px;height:340px" viewBox="0 0 402.6 340"><line x1="59.0" x2="354.6" y1="114.35" y2="114.35" stroke="#e5e7ec" stroke-width="1.35"/><text class="m" x="54.6" y="119.05" text-anchor="end" font-size="16.6" fill="#3f4763">1</text><line x1="59.0" x2="354.6" y1="147.61" y2="147.61" stroke="#e5e7ec" stroke-width="1.35"/><text class="m" x="54.6" y="152.31" text-anchor="end" font-size="16.6" fill="#3f4763">0.8</text><line x1="59.0" x2="354.6" y1="180.87" y2="180.87" stroke="#e5e7ec" stroke-width="1.35"/><text class="m" x="54.6" y="185.57" text-anchor="end" font-size="16.6" fill="#3f4763">0.6</text><line x1="59.0" x2="354.6" y1="214.13" y2="214.13" stroke="#e5e7ec" stroke-width="1.35"/><text class="m" x="54.6" y="218.83" text-anchor="end" font-size="16.6" fill="#3f4763">0.4</text><line x1="59.0" x2="354.6" y1="247.39" y2="247.39" stroke="#e5e7ec" stroke-width="1.35"/><text class="m" x="54.6" y="252.09" text-anchor="end" font-size="16.6" fill="#3f4763">0.2</text><line x1="59.0" x2="354.6" y1="280.65" y2="280.65" stroke="#c8cbd5" stroke-width="1.35"/><text class="m" x="54.6" y="285.35" text-anchor="end" font-size="16.6" fill="#3f4763">0</text><clipPath id="c1795"><rect x="0" y="0" width="402.6" height="282.15"/></clipPath><g clip-path="url(#c1795)"><polyline points="69.9,280.6 82.3,280.6 94.7,280.6 107.0,280.6 119.4,280.6 131.8,280.6 144.2,280.6 156.5,280.6 168.9,280.6 181.3,280.6 193.7,280.6 206.1,280.6 218.4,280.6 230.8,280.6 243.2,280.6 255.6,280.6 268.0,280.6 280.3,280.6 292.7,280.6 305.1,280.6 317.5,280.6 329.8,280.6 342.2,280.6 354.6,280.6" fill="none" stroke="#c3c6cf" stroke-width="2.7" stroke-linejoin="miter"/><polyline points="69.9,280.6 82.3,280.6 94.7,280.6 107.0,280.6 119.4,280.6 131.8,280.6 144.2,280.6 156.5,280.6 168.9,280.6 181.3,114.4 193.7,280.6 206.1,280.6 218.4,280.6 230.8,280.6 243.2,280.6 255.6,280.6 268.0,280.6 280.3,280.6 292.7,280.6 305.1,280.6 317.5,280.6 329.8,280.6 342.2,280.6 354.6,280.6" fill="none" stroke="#4f43dd" stroke-width="2.8" stroke-linejoin="miter"/></g><text x="69.9" y="310.5" text-anchor="middle" font-size="16.4" fill="#474f6a">Sep 3</text><text x="354.6" y="310.5" text-anchor="middle" font-size="16.4" fill="#474f6a">Sep 4</text></svg>
<div class="t ct" style="top:21.13px;font-size:22px;left:20.60px;letter-spacing:0.539px;">Check failures</div>
<div class="t big" style="top:66.48px;font-size:33.4px;left:19.60px;">1</div>
</div>
<div class="t h2" style="top:927.98px;font-size:22px;left:360.70px;letter-spacing:0.710px;">Asset Health</div>
<div class="card" style="left:360.25px;top:973.3px;width:1672px;height:397px"></div>
<div class="t tab" style="top:1006.25px;font-size:19.2px;left:382.70px;letter-spacing:0.398px;font-weight:bold;color:#11162b;">Materialization failures (5)</div>
<div class="t tab" style="top:1006.25px;font-size:19.2px;left:649.90px;letter-spacing:-0.008px;font-weight:bold;">Freshness failures (1)</div>
<div class="t tab" style="top:1006.25px;font-size:19.2px;left:869.40px;letter-spacing:0.078px;font-weight:bold;">Check failures (1)</div>
<div class="t tab" style="top:1006.25px;font-size:19.2px;left:1051.40px;letter-spacing:0.027px;font-weight:bold;">Freshness warnings (6)</div>
<div class="t tab" style="top:1006.25px;font-size:19.2px;left:1288.40px;letter-spacing:0.151px;font-weight:bold;">Check warnings (4)</div>
<div class="abs" style="left:372px;top:1056.5px;width:1651px;height:1.4px;background:#e4e6eb"></div>
<div class="abs" style="left:383.20000000000005px;top:1053.6px;width:245.8px;height:2.7px;background:#11162b"></div>
<svg class="abs" style="left:383.35px;top:1092.23px;width:21.33px;height:21.33px;color:#3f4763" viewBox="0 0 24 24"><g fill="none" stroke="currentColor" stroke-width="1.900"><rect x="3.400" y="3.400" width="17.200" height="17.200" rx="1.500"/><path d="M3.400 9.200h17.200M3.400 14.900h17.200M9.200 9.200v11.400M14.900 9.200v11.400" stroke-width="1.600"/></g></svg>
<div class="t row" style="top:1088.25px;font-size:19.2px;left:410.50px;letter-spacing:0.534px;">poll_snowflake_query_history_hour</div>
<div class="t row" style="top:1088.25px;font-size:19.2px;left:1755.90px;letter-spacing:0.387px;">5 minutes ago</div>
<div class="abs" style="left:1892.1px;top:1093.40px;width:1.4px;height:19px;background:#e2e4ea"></div>
<svg viewBox="0 0 24 24" style="position:absolute;left:1915.6999999999998px;top:1093.90px;width:18px;height:18px"><circle cx="12" cy="12" r="12" fill="#b8362c"/><path d="M5.4 9.2L10.6 15.2L14.1 10L18.5 15.5" fill="none" stroke="#fff" stroke-width="2"/></svg>
<div class="abs" style="left:1957.4px;top:1093.40px;width:1.4px;height:19px;background:#e2e4ea"></div>
<svg class="abs" style="left:1982px;top:1099.90px;width:17px;height:6px" viewBox="0 0 17 6"><circle cx="2.4" cy="3" r="1.55" fill="#11162b"/><circle cx="8.3" cy="3" r="1.55" fill="#11162b"/><circle cx="14.2" cy="3" r="1.55" fill="#11162b"/></svg>
<svg class="abs" style="left:383.35px;top:1150.03px;width:21.33px;height:21.33px;color:#3f4763" viewBox="0 0 24 24"><g fill="none" stroke="currentColor" stroke-width="1.900"><rect x="3.400" y="3.400" width="17.200" height="17.200" rx="1.500"/><path d="M3.400 9.200h17.200M3.400 14.900h17.200M9.200 9.200v11.400M14.900 9.200v11.400" stroke-width="1.600"/></g></svg>
<div class="t row" style="top:1146.05px;font-size:19.2px;left:410.90px;letter-spacing:0.263px;">ANALYTICS / orders_augmented</div>
<div class="t row" style="top:1146.05px;font-size:19.2px;left:1768.40px;letter-spacing:0.060px;">14 hours ago</div>
<div class="abs" style="left:1892.1px;top:1151.20px;width:1.4px;height:19px;background:#e2e4ea"></div>
<svg viewBox="0 0 24 24" style="position:absolute;left:1915.6999999999998px;top:1151.70px;width:18px;height:18px"><circle cx="12" cy="12" r="12" fill="#b8362c"/><path d="M5.4 9.2L10.6 15.2L14.1 10L18.5 15.5" fill="none" stroke="#fff" stroke-width="2"/></svg>
<div class="abs" style="left:1957.4px;top:1151.20px;width:1.4px;height:19px;background:#e2e4ea"></div>
<svg class="abs" style="left:1982px;top:1157.70px;width:17px;height:6px" viewBox="0 0 17 6"><circle cx="2.4" cy="3" r="1.55" fill="#11162b"/><circle cx="8.3" cy="3" r="1.55" fill="#11162b"/><circle cx="14.2" cy="3" r="1.55" fill="#11162b"/></svg>
<div class="abs" style="left:372px;top:1130.1px;width:1651px;height:1.4px;background:#e4e6eb"></div>
</main>
</div>
</body></html>
